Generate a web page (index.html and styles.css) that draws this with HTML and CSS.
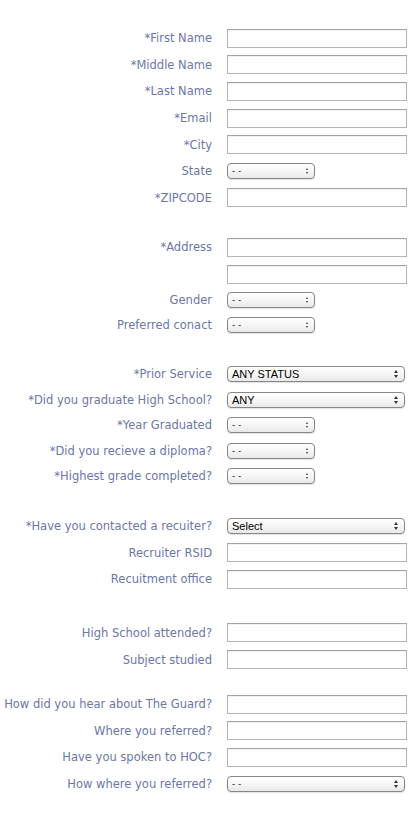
FILE: index.html
```html
<!DOCTYPE html>
<html>
<head>
<meta charset="utf-8">
<link rel="stylesheet" href="styles.css">
</head>
<body>
<form class="form">
  <section class="group g1">
    <div class="row"><label class="lbl">*First Name</label><input class="txt" type="text"></div>
    <div class="row"><label class="lbl">*Middle Name</label><input class="txt" type="text"></div>
    <div class="row"><label class="lbl">*Last Name</label><input class="txt" type="text"></div>
    <div class="row"><label class="lbl">*Email</label><input class="txt" type="text"></div>
    <div class="row"><label class="lbl">*City</label><input class="txt" type="text"></div>
    <div class="row"><label class="lbl">State</label><span class="sel small"><select><option>- -</option></select></span></div>
    <div class="row"><label class="lbl">*ZIPCODE</label><input class="txt" type="text"></div>
  </section>
  <section class="group g2">
    <div class="row"><label class="lbl">*Address</label><input class="txt" type="text"></div>
    <div class="row"><label class="lbl"></label><input class="txt" type="text"></div>
    <div class="row srow"><label class="lbl">Gender</label><span class="sel small"><select><option>- -</option></select></span></div>
    <div class="row srow"><label class="lbl">Preferred conact</label><span class="sel small"><select><option>- -</option></select></span></div>
  </section>
  <section class="group g3">
    <div class="row s3"><label class="lbl">*Prior Service</label><span class="sel wide"><select class="dark"><option>ANY STATUS</option></select></span></div>
    <div class="row s3"><label class="lbl">*Did you graduate High School?</label><span class="sel wide"><select class="dark"><option>ANY</option></select></span></div>
    <div class="row s3"><label class="lbl">*Year Graduated</label><span class="sel small"><select><option>- -</option></select></span></div>
    <div class="row s3"><label class="lbl">*Did you recieve a diploma?</label><span class="sel small"><select><option>- -</option></select></span></div>
    <div class="row s3"><label class="lbl">*Highest grade completed?</label><span class="sel small"><select><option>- -</option></select></span></div>
  </section>
  <section class="group g4">
    <div class="row"><label class="lbl">*Have you contacted a recuiter?</label><span class="sel wide"><select class="dark"><option>Select</option></select></span></div>
    <div class="row"><label class="lbl">Recruiter RSID</label><input class="txt" type="text"></div>
    <div class="row"><label class="lbl">Recuitment office</label><input class="txt" type="text"></div>
  </section>
  <section class="group g5">
    <div class="row"><label class="lbl">High School attended?</label><input class="txt" type="text"></div>
    <div class="row"><label class="lbl">Subject studied</label><input class="txt" type="text"></div>
  </section>
  <section class="group g6">
    <div class="row"><label class="lbl">How did you hear about The Guard?</label><input class="txt" type="text"></div>
    <div class="row"><label class="lbl">Where you referred?</label><input class="txt" type="text"></div>
    <div class="row"><label class="lbl">Have you spoken to HOC?</label><input class="txt" type="text"></div>
    <div class="row"><label class="lbl">How where you referred?</label><span class="sel wide"><select><option>- -</option></select></span></div>
  </section>
</form>
</body>
</html>
```
FILE: styles.css
```css
html, body {
  margin: 0;
  padding: 0;
  background: #ffffff;
}

body {
  font-family: "DejaVu Sans", "Liberation Sans", sans-serif;
  font-size: 11.5px;
  color: #6c76a8;
}

.form {
  padding-top: 25px;
  display: flex;
  flex-direction: column;
}

.group {
  display: flex;
  flex-direction: column;
}

.g2 { margin-top: 23px; }
.g3 { margin-top: 24px; }
.g4 { margin-top: 24px; }
.g5 { margin-top: 27px; }
.g6 { margin-top: 18px; }

.row {
  display: flex;
  align-items: center;
  height: 26.6px;
}

.srow { height: 25px; }
.s3 { height: 25.5px; }

.lbl {
  width: 212px;
  padding-right: 15px;
  text-align: right;
  white-space: nowrap;
  box-sizing: content-box;
  flex: none;
}

.txt {
  box-sizing: border-box;
  width: 180px;
  height: 19px;
  margin: 0;
  padding: 0 3px;
  border: 1px solid #b4b4b4;
  border-top-color: #a2a2a2;
  box-shadow: inset 0 1px 1px rgba(0, 0, 0, 0.06);
  background: #fff;
  outline: none;
}

.sel {
  position: relative;
  display: inline-block;
  height: 16px;
}

.sel select {
  -webkit-appearance: none;
  appearance: none;
  box-sizing: border-box;
  height: 16px;
  margin: 0;
  padding: 0 0 0 4px;
  border: 1px solid #878787;
  border-radius: 4px;
  background: linear-gradient(#ffffff 0%, #f6f6f6 50%, #e9e9e9 100%);
  font-family: "DejaVu Sans", "Liberation Sans", sans-serif;
  font-size: 9px;
  line-height: 14px;
  color: #222;
  outline: none;
  box-shadow: 0 1px 1px rgba(0, 0, 0, 0.12);
}

.sel select.dark {
  font-family: "Liberation Sans", "DejaVu Sans", sans-serif;
  font-size: 11px;
  color: #000;
}

.small select { width: 88px; }
.wide select { width: 178px; }

.sel::before,
.sel::after {
  content: "";
  position: absolute;
  right: 7px;
  width: 0;
  height: 0;
  border-left: 2px solid transparent;
  border-right: 2px solid transparent;
  pointer-events: none;
}

.sel::before {
  top: 4px;
  border-bottom: 3px solid #333;
}

.sel::after {
  top: 9px;
  border-top: 3px solid #333;
}

.small::before,
.small::after {
  border-left-width: 1px;
  border-right-width: 1px;
}
.small::before { top: 5px; border-bottom-width: 2px; }
.small::after { top: 9px; border-top-width: 2px; }
```
